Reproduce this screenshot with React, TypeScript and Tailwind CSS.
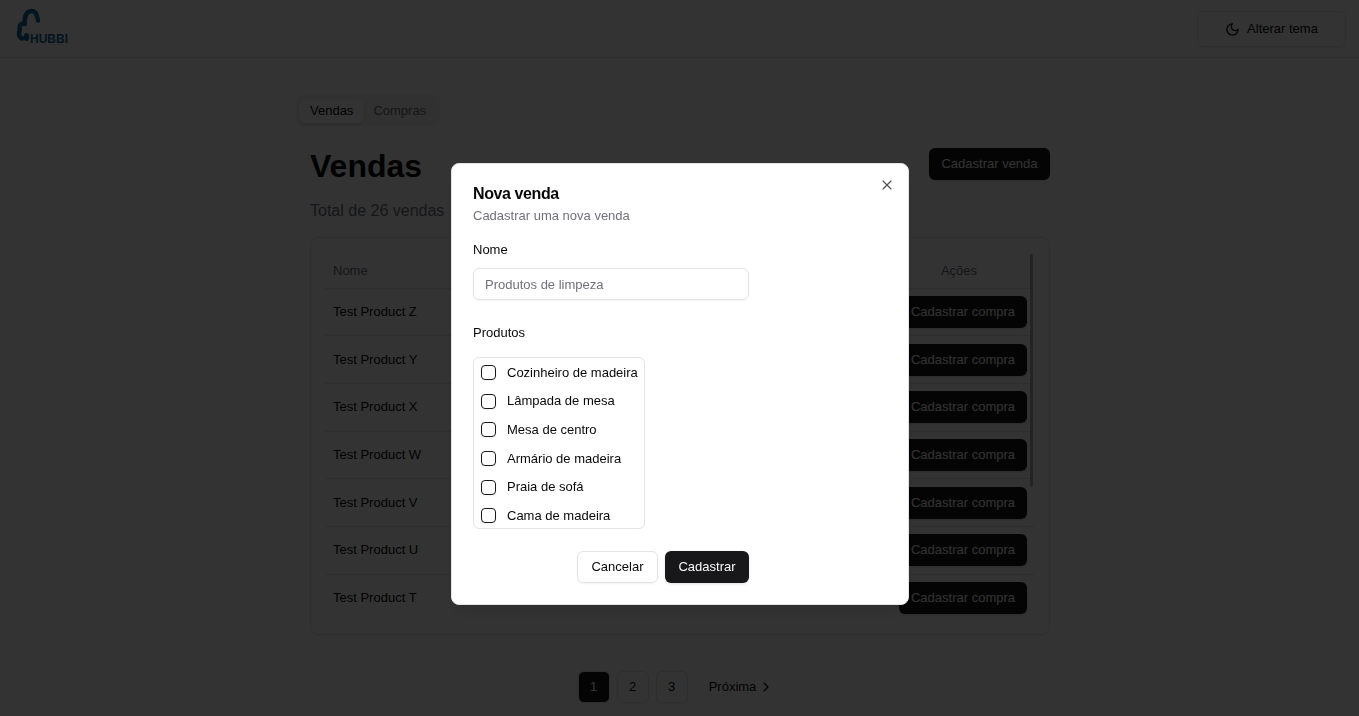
import { useState } from "react";
import type { ReactNode } from "react";
import { ChevronRight, X } from "lucide-react";

const sales = ["Z", "Y", "X", "W", "V", "U", "T"].map((s) => `Test Product ${s}`);

const products = [
  "Cozinheiro de madeira",
  "Lâmpada de mesa",
  "Mesa de centro",
  "Armário de madeira",
  "Praia de sofá",
  "Cama de madeira",
];

function Logo() {
  return (
    <svg viewBox="0 0 60 40" className="h-10 w-[60px]" role="img" aria-label="Hubbi">
      <g fill="none" stroke="#12699c" strokeLinecap="round" strokeLinejoin="round">
        <path d="M24 13.500C23 7 21 4 18 4c-5 0-7.500 4.500-7.500 12" strokeWidth="4.500" />
        <path d="M11 17C7 15.500 4.500 19 6 22.500 4 26 5 30.500 8 31.500" strokeWidth="4.500" />
      </g>
      <ellipse cx="12.500" cy="30" rx="2.800" ry="4" fill="#12699c" />
      <text x="16" y="36" fill="#12699c" fontFamily="Liberation Sans, sans-serif" fontSize="12" fontWeight="700">
        HUBBI
      </text>
    </svg>
  );
}

function MoonIcon() {
  return (
    <svg
      viewBox="0 0 24 24"
      className="size-[15px]"
      fill="none"
      stroke="currentColor"
      strokeWidth="2"
      strokeLinecap="round"
      strokeLinejoin="round"
      aria-hidden="true"
    >
      <path d="M12 3a6 6 0 0 0 9 9 9 9 0 1 1-9-9Z" />
    </svg>
  );
}

function DarkButton({ children, className }: { children: ReactNode; className: string }) {
  return (
    <button
      type="button"
      className={`h-8 rounded-md bg-zinc-900 text-center whitespace-nowrap text-zinc-50 shadow-sm ${className}`}
    >
      {children}
    </button>
  );
}

function Header() {
  return (
    <header className="flex h-[58px] items-start justify-between border-b border-zinc-200 pt-[7px] pr-[13px] pl-[14px]">
      <Logo />
      <button
        type="button"
        className="mt-1 flex h-9 w-[149px] items-center justify-center gap-[7px] rounded-md border border-zinc-200 shadow-xs"
      >
        <MoonIcon />
        Alterar tema
      </button>
    </header>
  );
}

function SalesTable() {
  return (
    <section className="mt-[14px] rounded-lg border border-zinc-200 px-[14px] pt-4 pb-[13px]">
      <div className="relative">
        <table className="h-[367px] w-full">
          <thead>
            <tr className="h-[34px] border-b border-zinc-200 text-zinc-500">
              <th className="px-2 text-left font-normal">Nome</th>
              <th className="w-[152px] px-2 text-center font-normal">Ações</th>
            </tr>
          </thead>
          <tbody>
            {sales.map((name) => (
              <tr key={name} className="border-b border-zinc-200 last:border-b-0">
                <td className="px-2">{name}</td>
                <td className="px-2 text-right">
                  <DarkButton className="w-32">Cadastrar compra</DarkButton>
                </td>
              </tr>
            ))}
          </tbody>
        </table>
        <div className="absolute top-0 right-0.5 h-[233px] w-[3px] rounded-full bg-[#b4b4b4]" />
      </div>
    </section>
  );
}

function Pagination() {
  return (
    <nav aria-label="Paginação" className="mt-9 flex h-8 justify-center gap-[7px] pl-1.5">
      <button type="button" aria-current="page" className="w-8 rounded-md border border-zinc-200 bg-zinc-900 text-zinc-50">
        1
      </button>
      <button type="button" className="w-8 rounded-md border border-zinc-200 shadow-xs">
        2
      </button>
      <button type="button" className="w-8 rounded-md border border-zinc-200 shadow-xs">
        3
      </button>
      <button type="button" className="flex items-center gap-0.5 px-[14px]">
        Próxima
        <ChevronRight size={16} strokeWidth={1.75} />
      </button>
    </nav>
  );
}

function NewSaleDialog({ onClose }: { onClose: () => void }) {
  return (
    <div className="fixed inset-0 flex items-center justify-center bg-black/80 pt-[52px] pl-px">
      <div
        role="dialog"
        aria-modal="true"
        aria-labelledby="dialog-title"
        className="relative w-[458px] max-w-full rounded-lg border border-zinc-200 bg-white px-[21px] pt-5 pb-[21px] shadow-lg"
      >
        <h2 id="dialog-title" className="text-base leading-5 font-bold tracking-tight">
          Nova venda
        </h2>
        <p className="mt-[3px] leading-[18px] text-zinc-500">Cadastrar uma nova venda</p>
        <button type="button" aria-label="Fechar" onClick={onClose} className="absolute top-[13px] right-[13px] opacity-70">
          <X size={16} strokeWidth={1.75} />
        </button>

        <form className="mt-4 w-[276px]" onSubmit={(e) => e.preventDefault()}>
          <label htmlFor="sale-name" className="block leading-[18px]">
            Nome
          </label>
          <input
            id="sale-name"
            type="text"
            placeholder="Produtos de limpeza"
            className="mt-[9px] block h-8 w-full rounded-md border border-zinc-200 px-[11px] shadow-xs placeholder:text-zinc-500"
          />
          <fieldset className="mt-6">
            <legend className="leading-[18px]">Produtos</legend>
            <div className="mt-[15px] h-[172px] w-[172px] overflow-hidden rounded-md border border-zinc-200">
              <ul className="flex h-[172px] flex-col px-[7px]">
                {products.map((product) => (
                  <li key={product} className="flex flex-1 items-center">
                    <label className="flex items-center gap-[11px] whitespace-nowrap">
                      <input
                        type="checkbox"
                        className="size-[15px] shrink-0 appearance-none rounded-sm border border-zinc-900 shadow-xs checked:bg-zinc-900"
                      />
                      {product}
                    </label>
                  </li>
                ))}
              </ul>
            </div>
          </fieldset>
          <div className="mt-[22px] flex justify-end gap-[7px]">
            <button type="button" onClick={onClose} className="h-8 w-[81px] rounded-md border border-zinc-200 shadow-xs">
              Cancelar
            </button>
            <button type="submit" className="h-8 w-[84px] rounded-md bg-zinc-900 text-zinc-50 shadow-sm">
              Cadastrar
            </button>
          </div>
        </form>
      </div>
    </div>
  );
}

export default function App() {
  const [open, setOpen] = useState(true);
  return (
    <div className="min-h-screen bg-white pb-3 font-['Liberation_Sans',Arial,sans-serif] text-[13px] text-zinc-950">
      <Header />
      <main className="mx-auto max-w-[763px] pt-[37px] pr-[11px] pl-3">
        <div role="tablist" className="-ml-[14px] flex h-8 w-fit rounded-lg bg-zinc-100 px-[3px] py-1 text-zinc-500">
          <button type="button" role="tab" aria-selected="true" className="rounded-md bg-white px-[11px] text-zinc-950 shadow-sm">
            Vendas
          </button>
          <button type="button" role="tab" aria-selected="false" className="pr-[11px] pl-[9px]">
            Compras
          </button>
        </div>
        <div className="mt-[21px] flex items-start justify-between">
          <h1 className="text-[32px] leading-9 font-bold">Vendas</h1>
          <DarkButton className="w-[121px]">Cadastrar venda</DarkButton>
        </div>
        <p className="mt-[15px] text-base leading-6 text-zinc-500">Total de 26 vendas</p>
        <SalesTable />
        <Pagination />
      </main>
      {open && <NewSaleDialog onClose={() => setOpen(false)} />}
    </div>
  );
}
